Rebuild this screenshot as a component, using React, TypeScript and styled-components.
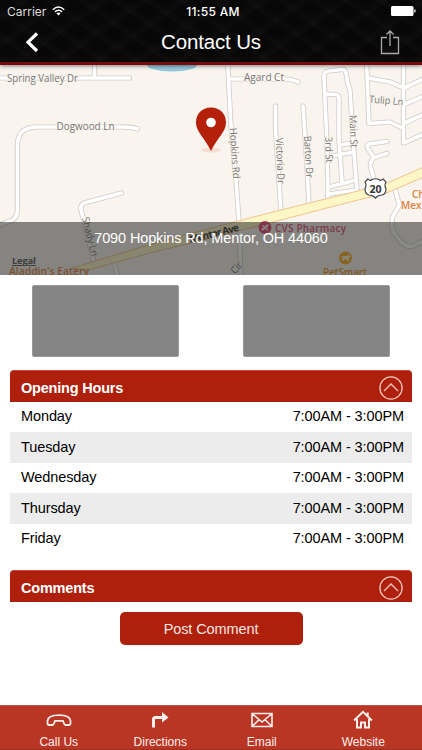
import React from "react";
import styled, { createGlobalStyle } from "styled-components";

type Hours = {
  day: string;
  time: string;
};

type RoadLabel = {
  text: string;
  x: number;
  y: number;
  length: number;
  rotate?: number;
};

const hours: Hours[] = [
  { day: "Monday", time: "7:00AM - 3:00PM" },
  { day: "Tuesday", time: "7:00AM - 3:00PM" },
  { day: "Wednesday", time: "7:00AM - 3:00PM" },
  { day: "Thursday", time: "7:00AM - 3:00PM" },
  { day: "Friday", time: "7:00AM - 3:00PM" },
];

const roads: string[] = [
  "M-3 78H129.500M94.500 60V78",
  "M137.500 129C132 126.500 126 127 118 127H37Q18 127 17.500 144V210Q17 219 10 221L-3 226",
  "M121.500 193L84 203Q80 205 81 210L85 225L94 263",
  "M227.500 60L231 127L236 180L239 222L241 280",
  "M230 79H286Q291 79 298 82",
  "M275.500 106V130L281 212",
  "M303 106L306 150L309 204",
  "M328 200L327 145L324 76Q323.500 71.500 329 71L342 69.500Q345 69 346 73L347.500 82L350 90L353 140L357 190",
  "M325 94L336 94.500Q339 95 339 99V140L342 182",
  "M332 156L354 152M340 145L352 143M329 187L356 180M329 194L357 190",
  "M366.500 60L369 123.500L390 122L402 128",
  "M368 78L390 82L404 88L425 78",
  "M403.500 60V143L425 133.500M404 104.500L425 95.500M404 123.500L425 113.500",
  "M387 141.500L369 144Q366 145 367.500 148L374 157.500L387 153.500M374 157.500Q369.500 163 370.500 167L375.500 184",
  "M394 186L399.500 205L393 216Q391.500 219 392 226Q392.500 232 395 234L401 242Q407 248 413 246L425 240",
  "M114 263L119 280",
];

const roadLabels: RoadLabel[] = [
  { text: "Spring Valley Dr", x: 7, y: 81.5, length: 71 },
  { text: "Dogwood Ln", x: 56.5, y: 129.5, length: 58 },
  { text: "Agard Ct", x: 244, y: 80.5, length: 40 },
  { text: "Tulip Ln", x: 369, y: 102.5, length: 34, rotate: 5 },
  { text: "Hopkins Rd", x: 229.5, y: 128, length: 51, rotate: 86 },
  { text: "Victoria Dr", x: 276, y: 138, length: 46, rotate: 88 },
  { text: "Barton Dr", x: 304, y: 136, length: 42, rotate: 87 },
  { text: "3rd St", x: 325, y: 137, length: 26, rotate: 88 },
  { text: "Main St", x: 349.5, y: 115, length: 33, rotate: 88 },
  { text: "Shady Ln", x: 82, y: 218, length: 40, rotate: 76 },
  { text: "Cir", x: 235, y: 274.5, length: 12, rotate: -48 },
];

const GlobalStyle = createGlobalStyle`
  * {
    box-sizing: border-box;
  }

  body {
    margin: 0;
    background: #fff;
    font-family: "Liberation Sans", Arial, sans-serif;
  }
`;

const Page = styled.div`
  display: flex;
  flex-direction: column;
  width: 422px;
  height: 750px;
  overflow: hidden;
  background: #fff;
`;

const Header = styled.header`
  position: relative;
  flex: none;
  height: 65px;
  border-bottom: 3px solid #780a0e;
  background-color: #070707;
  background-image:
    repeating-linear-gradient(35deg, rgba(255, 255, 255, 0.016) 0 4px, transparent 9px 19px),
    repeating-linear-gradient(-35deg, rgba(255, 255, 255, 0.016) 0 4px, transparent 10px 23px);
  box-shadow: 0 1px 4px rgba(0, 0, 0, 0.5);
  color: #fff;
  z-index: 1;
`;

const StatusBar = styled.div`
  display: grid;
  grid-template-columns: 1fr auto 1fr;
  align-items: center;
  height: 22px;
  padding: 0 6px 0 7px;
`;

const Carrier = styled.span`
  display: flex;
  align-items: center;
  gap: 6px;
  font: 12px Inter, sans-serif;
  color: #ddd;
`;

const Clock = styled.span`
  font: 500 12px Inter, sans-serif;
  letter-spacing: 0.3px;
  padding-left: 3px;
`;

const BatteryIcon = styled.svg`
  justify-self: end;
`;

const TitleBar = styled.div`
  display: grid;
  grid-template-columns: 60px 1fr 60px;
  align-items: center;
  height: 40px;
`;

const Title = styled.h1`
  margin: 0;
  text-align: center;
  font-size: 20.5px;
  font-weight: 400;
  letter-spacing: -0.15px;
`;

const IconButton = styled.button`
  display: flex;
  padding: 0;
  border: 0;
  background: none;
  color: inherit;
`;

const MapBox = styled.section`
  position: relative;
  flex: none;
  height: 210px;
  background: #f9f4ed;
`;

const MapDrawing = styled.svg`
  display: block;
  font-family: "Open Sans", sans-serif;
`;

const Address = styled.div`
  position: absolute;
  left: 0;
  right: 0;
  bottom: 0;
  height: 53px;
  padding-top: 7px;
  background: rgba(40, 40, 40, 0.55);
  color: #fff;
  font-size: 14.5px;
  letter-spacing: -0.13px;
  line-height: 18px;
  text-align: center;
`;

const Photos = styled.div`
  display: flex;
  justify-content: space-between;
  padding: 10px 32px 13px;
`;

const Photo = styled.div`
  width: 147px;
  height: 72px;
  border: 1px solid #999;
  border-radius: 2px;
  background: #858585;
`;

const Panel = styled.section`
  margin: 0 10px;
`;

const PanelHeader = styled.div`
  display: flex;
  align-items: center;
  justify-content: space-between;
  height: 32px;
  padding: 3px 9px 0 11px;
  border: 1px solid #c24a3b;
  border-width: 1px 0 0;
  border-radius: 4px 4px 0 0;
  background: #ae200c;
  color: #fff;
`;

const PanelTitle = styled.h2`
  margin: 0;
  font-size: 14.5px;
  font-weight: 700;
  letter-spacing: -0.2px;
`;

const HoursList = styled.div`
  padding-bottom: 16px;
`;

const HoursRow = styled.div<{ $shaded: boolean }>`
  display: flex;
  align-items: center;
  justify-content: space-between;
  height: 30.4px;
  padding: 0 8px 1.5px 11px;
  background: ${(props) => (props.$shaded ? "#ececec" : "#fff")};
  color: #000;
  font-size: 14.5px;
  letter-spacing: -0.1px;
`;

const PostButton = styled.button`
  display: block;
  width: 183px;
  height: 33px;
  margin: 10px auto 0;
  padding: 1px 0 0;
  border: 0;
  border-radius: 5px;
  background: #ae200c;
  color: #fbe6e2;
  font-family: inherit;
  font-size: 14.5px;
  letter-spacing: -0.1px;
`;

const TabBar = styled.nav`
  display: grid;
  grid-template-columns: repeat(4, 1fr);
  height: 45px;
  margin-top: auto;
  padding: 0 8px;
  border-top: 1px solid #b85547;
  border-bottom: 1px solid #9c3022;
  background: #b93524;
`;

const Tab = styled.a`
  display: flex;
  flex-direction: column;
  align-items: center;
  padding-top: 4px;
  color: #fff0ed;
  font-size: 12px;
  line-height: 14px;

  svg {
    display: block;
    margin-bottom: 3px;
  }
`;

const CollapseIcon: React.FC = () => (
  <svg width="24" height="24" viewBox="0 0 24 24" fill="none" stroke="#f2c4bd" strokeWidth="1.3">
    <circle cx="12" cy="12" r="11.1" />
    <path d="M5 15L12 8L19 15" />
  </svg>
);

const MapView: React.FC = () => (
  <MapDrawing width="422" height="210" viewBox="0 65 422 210">
    <ellipse cx="172" cy="65" rx="25" ry="6.500" fill="#94c9dc" />
    <g fill="none" strokeLinecap="round" strokeLinejoin="round">
      {roads.map((d) => (
        <path key={d} d={d} stroke="#cfccc8" strokeWidth="5.200" />
      ))}
      {roads.map((d) => (
        <path key={d} d={d} stroke="#fff" strokeWidth="3.600" />
      ))}
    </g>
    <path
      d="M72 268L150 244.500L211 228L281 210L350 193L385 184L425 166.500V176.500L385 193.500L350 202L281 220L211 238L150 253L88 270Z"
      fill="#fdf6c6"
      stroke="#f0c48e"
      strokeWidth="1"
    />
    <g fontSize="10" fill="#777" stroke="#f9f4ed" strokeWidth="1.500" paintOrder="stroke">
      {roadLabels.map((label) => (
        <text
          key={label.text}
          x={label.x}
          y={label.y}
          textLength={label.length}
          lengthAdjust="spacingAndGlyphs"
          transform={label.rotate ? `rotate(${label.rotate} ${label.x} ${label.y})` : undefined}
        >
          {label.text}
        </text>
      ))}
    </g>
    <text x="190" y="243" textLength="51" fontSize="10" fontWeight="700" fill="#333" transform="rotate(-14 190 243)">
      Mentor Ave
    </text>
    <path
      d="M368 179Q370 181.500 372 179.500Q375.500 178 379 179.500Q381 181.500 383 179L386 182Q384 185 386 189Q386 194 382 195Q378 195 375.500 198Q373 195 369 195Q365 194 365 189Q367 185 365 182Z"
      fill="#fff"
      stroke="#444"
      strokeWidth="1.200"
    />
    <text x="375.500" y="192.500" textAnchor="middle" fontSize="10.500" fontWeight="700" fill="#333">
      20
    </text>
    <g fontSize="10" fontWeight="600" fill="#df8242">
      <text x="412" y="197.500">Ch</text>
      <text x="401" y="208.500" textLength="20.500">Mex</text>
      <text x="9" y="274.500" textLength="80" lengthAdjust="spacingAndGlyphs">Aladdin's Eatery</text>
    </g>
    <text x="12" y="264" textLength="24" fontSize="9.500" fontWeight="700" fill="#555" textDecoration="underline">
      Legal
    </text>
    <circle cx="265" cy="227.500" r="6.500" fill="#e8436b" />
    <g stroke="#fbdde4" strokeWidth="2.400" strokeLinecap="round">
      <path d="M262.500 229.500L267.500 225.500" />
      <path d="M263 225.500L267.500 230" strokeWidth="1.400" />
    </g>
    <text x="275" y="231.500" textLength="71" fontSize="10" fontWeight="600" fill="#e25177">
      CVS Pharmacy
    </text>
    <circle cx="345.500" cy="258" r="6.500" fill="#f9ad18" />
    <path d="M341 257L343 256H347L348.500 254.500L350.500 256L349 258.500V261H347.500L347 259.500H344V261H342.500V258.500Z" fill="#fff2cf" />
    <text x="323" y="276" textLength="44" fontSize="10" fontWeight="600" fill="#e99516">
      PetSmart
    </text>
    <ellipse cx="211" cy="150" rx="10" ry="2.500" fill="#f0b5a9" opacity="0.350" />
    <path
      d="M211 107.500C202 107.500 196 114 196 122.500C196 132 205 138 211 151C217 138 226 132 226 122.500C226 114 220 107.500 211 107.500Z"
      fill="#b5200b"
    />
    <circle cx="211" cy="122.500" r="4.800" fill="#fff" />
  </MapDrawing>
);

const App: React.FC = () => {
  return (
    <>
      <GlobalStyle />
      <Page>
        <Header>
          <StatusBar>
            <Carrier>
              Carrier
              <svg width="13" height="10" viewBox="0 0 13 10" fill="none" stroke="#fff" strokeWidth="1.500">
                <path d="M0.800 3.700Q6.500 -1.700 12.200 3.700M2.900 5.900Q6.500 2.500 10.100 5.900" />
                <path d="M4.400 7.300Q6.500 5.500 8.600 7.300L6.500 9.500Z" fill="#fff" stroke="none" />
              </svg>
            </Carrier>
            <Clock>11:55 AM</Clock>
            <BatteryIcon width="25" height="10" viewBox="0 0 25 10" fill="#fff">
              <rect x="0" y="0" width="22.500" height="10" rx="1.500" />
              <path d="M23.300 3.300Q24.700 3.500 24.700 5Q24.700 6.500 23.300 6.700Z" />
            </BatteryIcon>
          </StatusBar>
          <TitleBar>
            <IconButton aria-label="Back">
              <svg width="60" height="24" viewBox="0 0 60 24" fill="none" stroke="#fff" strokeWidth="3.200">
                <path d="M37 3.500L28 12.200L37 21" />
              </svg>
            </IconButton>
            <Title>Contact Us</Title>
            <IconButton aria-label="Share">
              <svg width="60" height="26" viewBox="0 0 60 26" fill="none" stroke="#aaa" strokeWidth="1.300">
                <path d="M25 8.500H19.500V24.500H36.500V8.500H31M28 17V2M24.500 5.500L28 2L31.500 5.500" />
              </svg>
            </IconButton>
          </TitleBar>
        </Header>
        <MapBox>
          <MapView />
          <Address>7090 Hopkins Rd, Mentor, OH 44060</Address>
        </MapBox>
        <Photos>
          <Photo />
          <Photo />
        </Photos>
        <Panel>
          <PanelHeader>
            <PanelTitle>Opening Hours</PanelTitle>
            <CollapseIcon />
          </PanelHeader>
          <HoursList>
            {hours.map((item, index) => (
              <HoursRow key={item.day} $shaded={index % 2 === 1}>
                <span>{item.day}</span>
                <span>{item.time}</span>
              </HoursRow>
            ))}
          </HoursList>
        </Panel>
        <Panel>
          <PanelHeader>
            <PanelTitle>Comments</PanelTitle>
            <CollapseIcon />
          </PanelHeader>
          <PostButton>Post Comment</PostButton>
        </Panel>
        <TabBar>
          <Tab>
            <svg width="28" height="22" viewBox="0 0 28 22" fill="none" stroke="#fff0ed" strokeWidth="1.800">
              <path d="M2.500 13.500V11Q3 5.200 14 5.200Q25 5.200 25.500 11V13.500Q25.500 15 24 15H20.500Q19.500 15 19 13.500L18 10.800H10L9 13.500Q8.500 15 7.500 15H4Q2.500 15 2.500 13.500Z" />
            </svg>
            Call Us
          </Tab>
          <Tab>
            <svg width="20" height="22" viewBox="0 0 20 22" fill="none" stroke="#fff0ed" strokeWidth="3">
              <path d="M3.500 17.500V9.500Q3.500 7.500 5.500 7.500H12" />
              <path d="M12 2L18.500 7.500L12 12.500Z" fill="#fff0ed" stroke="none" />
            </svg>
            Directions
          </Tab>
          <Tab>
            <svg width="24" height="22" viewBox="0 0 24 22" fill="none" stroke="#fff0ed" strokeWidth="1.600">
              <path d="M2 3.500H22V16.500H2ZM2.500 4L12 12L21.500 4M2.500 16L9 9.700M21.500 16L15 9.700" />
            </svg>
            Email
          </Tab>
          <Tab>
            <svg width="22" height="22" viewBox="0 0 22 22" fill="none" stroke="#fff0ed" strokeWidth="2">
              <path d="M2 10.500L11 1.800L20 10.500M5 9V17.500H9V12.500H13V17.500H17V9" />
              <path d="M15.700 2.500V6" />
            </svg>
            Website
          </Tab>
        </TabBar>
      </Page>
    </>
  );
};

export default App;
